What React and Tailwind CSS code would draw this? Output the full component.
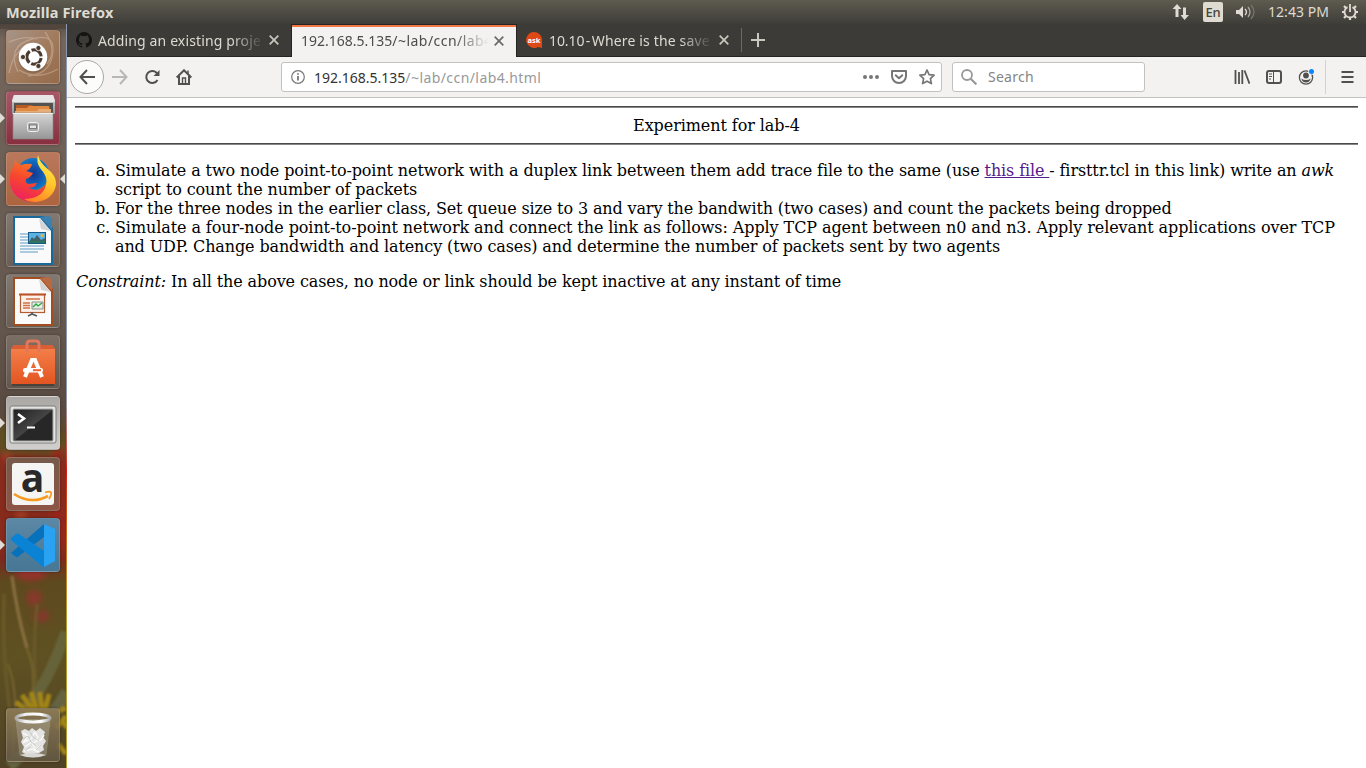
import React from "react";

const ui = "font-['Noto_Sans','Open_Sans',sans-serif]";

function Tile({ className, children, left, right }) {
  return (
    <div className={`relative ml-[6px] h-[54px] w-[54px] shrink-0 rounded-[4px] border border-white/15 shadow-[0_0_3px_rgba(0,0,0,0.35)] ${className}`}>
      <svg viewBox="0 0 54 54" className="-ml-px -mt-px block h-[54px] w-[54px]">{children}</svg>
      {left && (
        <svg viewBox="0 0 5 10" className="absolute -left-[7px] top-[21px] h-[10px] w-[5px]"><path d="M0 0 5 5 0 10Z" fill="#dfdcd6" /></svg>
      )}
      {right && (
        <svg viewBox="0 0 5 10" className="absolute -right-[6px] top-[21px] h-[10px] w-[5px]"><path d="M5 0 0 5 5 10Z" fill="#dfdcd6" /></svg>
      )}
    </div>
  );
}

function Wallpaper() {
  return (
    <svg viewBox="0 0 67 744" preserveAspectRatio="none" className="absolute inset-0 h-full w-full">
      <defs>
        <linearGradient id="wall" x1="0" y1="0" x2="0" y2="1">
          <stop offset="0" stopColor="#5a4f46" />
          <stop offset="0.02" stopColor="#74665d" />
          <stop offset="0.4" stopColor="#64574e" />
          <stop offset="0.52" stopColor="#594a41" />
          <stop offset="0.56" stopColor="#62461f" />
          <stop offset="0.6" stopColor="#793023" />
          <stop offset="0.67" stopColor="#87291f" />
          <stop offset="0.72" stopColor="#7c2a1f" />
          <stop offset="0.75" stopColor="#5d4a1f" />
          <stop offset="0.85" stopColor="#5f5122" />
          <stop offset="1" stopColor="#4f4226" />
        </linearGradient>
        <filter id="soft" x="-30%" width="160%"><feGaussianBlur stdDeviation="3" /></filter>
        <filter id="soft1" x="-30%" width="160%"><feGaussianBlur stdDeviation="1.200" /></filter>
      </defs>
      <rect width="67" height="744" fill="url(#wall)" />
      <g filter="url(#soft)">
        <path d="M0 402 12 412 30 408 67 415V428H0Z" fill="#5d5120" />
        <path d="M-5 432Q20 426 70 440V530Q30 532-5 526Z" fill="#86291e" />
        <path d="M4 430Q26 455 20 500" stroke="#a63d25" strokeWidth="7" fill="none" />
        <path d="M60 424Q45 460 64 520" stroke="#98251b" strokeWidth="10" fill="none" />
        <ellipse cx="31" cy="548" rx="15" ry="9" fill="#96312a" />
        <ellipse cx="34" cy="574" rx="8" ry="8" fill="#88392a" />
        <ellipse cx="41" cy="592" rx="9" ry="6" fill="#85372b" />
      </g>
      <g filter="url(#soft1)" fill="none">
        <path d="M12 552Q17 590 27 624" stroke="#8b7041" strokeWidth="3" />
        <path d="M4 570Q2 640 12 700M37 580Q30 650 42 690" stroke="#6a5a2a" strokeWidth="3" />
        <path d="M66 608Q48 660 22 690" stroke="#66633a" strokeWidth="11" />
        <path d="M27 625Q38 650 30 680M8 640Q20 670 12 730" stroke="#77652f" strokeWidth="2" />
        <path d="M67 668Q35 720 9 742" stroke="#65633f" strokeWidth="12" />
        <path d="M16 678 28 688M22 671 34 688M31 668 37 687M40 668 42 686M49 670 45 687M59 687 66 684M62 695 67 704" stroke="#a38518" strokeWidth="5" />
        <path d="M56 704 66 692M58 720 66 730" stroke="#a38518" strokeWidth="5" />
      </g>
      <path d="M0 0H67V5H0Z" fill="#3b322c" opacity=".35" />
    </svg>
  );
}

function Launcher() {
  return (
    <aside className="relative flex w-[67px] shrink-0 flex-col overflow-hidden">
      <Wallpaper />
      <div className="relative flex flex-1 flex-col gap-[7px] pb-[6px] pt-[6px]">
        <Tile className="bg-gradient-to-br from-[#a5958a] via-[#a27b5d] to-[#946b4b]">
          <g fill="none" stroke="#dfcbbb" opacity=".4" strokeWidth="1.3">
            <path d="M12 42Q0 16 26 9T46 27Q43 44 22 46" />
            <path d="M3 12Q19 5 31 9M39 2Q52 20 41 34M52 39Q31 51 13 40M3 43Q7 22 21 16" />
          </g>
          <circle cx="27" cy="28" r="14.7" fill="#433429" opacity=".25" />
          <circle cx="27" cy="27" r="14.3" fill="#fff" />
          <circle cx="28" cy="27" r="7.2" fill="none" stroke="#4b3a2f" strokeWidth="3.1" strokeDasharray="13.1 2" strokeDashoffset="-1" />
          <g fill="#4b3a2f" stroke="#fff" strokeWidth=".8"><circle cx="17" cy="27" r="2.6" /><circle cx="32.4" cy="18" r="2.6" /><circle cx="32.4" cy="36" r="2.6" /></g>
        </Tile>

        <Tile left className="bg-gradient-to-b from-[#a85767] to-[#87303f]">
          <defs>
            <linearGradient id="cab" x1="0" y1="0" x2="0" y2="1"><stop stopColor="#d6d6d6" /><stop offset="1" stopColor="#969696" /></linearGradient>
          </defs>
          <path d="M8 4H47L49 9V23H6V9Z" fill="url(#cab)" />
          <path d="M8 4H47L49 11H6Z" fill="#e7e7e7" />
          <path d="M8 12H47V24H8Z" fill="#555350" />
          <path d="M10 14H26L28 16H44V24H10Z" fill="#b65b26" />
          <path d="M10 17H21L23 15H43V24H10Z" fill="#df8a40" />
          <path d="M9 20H31L33 18H45V24H9Z" fill="#e6ad76" />
          <path d="M7 22H47V48H7Z" fill="url(#cab)" stroke="#888" strokeWidth=".6" />
          <path d="M7 22.5H47" stroke="#f0efef" />
          <rect x="21.5" y="31.5" width="11" height="9" rx="2" fill="#aaa" stroke="#efefef" />
          <rect x="23.5" y="34" width="7" height="3.5" fill="#e5e5e5" stroke="#696969" strokeWidth=".8" />
        </Tile>

        <Tile left right className="bg-gradient-to-b from-[#b9785d] to-[#ad643e]">
          <defs>
            <linearGradient id="fox" x1=".85" y1="0" x2=".2" y2="1"><stop stopColor="#ffe64a" /><stop offset=".35" stopColor="#ffad1d" /><stop offset=".65" stopColor="#ff6b24" /><stop offset="1" stopColor="#f01a69" /></linearGradient>
            <linearGradient id="foxred" x1=".6" y1="0" x2=".2" y2="1"><stop stopColor="#ff7f22" /><stop offset=".5" stopColor="#f7452f" /><stop offset="1" stopColor="#ed1c66" /></linearGradient>
            <linearGradient id="foxtail" x1=".5" y1="0" x2=".3" y2="1"><stop stopColor="#fff04f" /><stop offset=".55" stopColor="#ffc52a" /><stop offset="1" stopColor="#ff8426" /></linearGradient>
            <radialGradient id="globe"><stop stopColor="#15348f" /><stop offset="1" stopColor="#117ac8" /></radialGradient>
          </defs>
          <circle cx="27" cy="22" r="16" fill="url(#globe)" />
          <path d="M9 8Q11 12 15 13Q20 11 26 12Q25 17 20 19L27 21Q25 25 20 27Q19 31 22 32L31 31Q28 37 22 35Q31 42 39 34L47 34Q42 50 26 50C11 49 3 38 4 27Q4 18 8 15Z" fill="url(#foxred)" />
          <path d="M32 3C35 17 51 18 50 33Q47 48 30 50Q22 50 18 47Q34 47 39 36C43 26 38 21 34 16Q30 10 32 3Z" fill="url(#foxtail)" />
        </Tile>

        <Tile className="bg-gradient-to-b from-[#817972] to-[#6b5e55]">
          <path d="M7 3H38L47 15V52H7Z" fill="#17699c" />
          <path d="M9 5H34L45 18V50H9Z" fill="#fafafa" />
          <path d="M34 4 46 17V6L43 3Z" fill="#3c81af" /><path d="M33 5 35 16 45 18Z" fill="#d4d5d6" />
          <g stroke="#5b9cc4" strokeWidth="1.2"><path d="M14 21H22M14 24H22M14 27H22M14 30H22M14 33H38M14 36H38M14 39H32" /></g>
          <rect x="22.5" y="19.5" width="17" height="11" fill="#5ab3e7" stroke="#175986" />
          <circle cx="36" cy="22.5" r="1.5" fill="#f4b53d" />
          <path d="M23 29 26 24 28 26 31 22 35 27 39 25V30H23Z" fill="#41616b" /><path d="M23 28H39V30H23Z" fill="#28795d" />
        </Tile>

        <Tile className="bg-gradient-to-b from-[#817972] to-[#6b5e55]">
          <path d="M7 3H38L47 15V52H7Z" fill="#a34c20" />
          <path d="M9 5H34L45 18V50H9Z" fill="#fafafa" />
          <path d="M34 4 46 17V6L43 3Z" fill="#b86b43" /><path d="M33 5 35 16 45 18Z" fill="#d4d5d6" />
          <rect x="14.5" y="20.5" width="24" height="18" fill="#fcf2eb" stroke="#b35d34" strokeWidth="1.2" />
          <path d="M13 20.5H40" stroke="#bd5127" strokeWidth="2" />
          <path d="M20 25H34M17 29H24M17 31.5H24M17 34H24" stroke="#d07141" strokeWidth="1.4" />
          <path d="M26 28H37V35H26Z" fill="#e7eee5" stroke="#82908a" /><path d="m27 33 3-3 2 2 4-3" fill="none" stroke="#26a737" strokeWidth="1.3" />
          <path d="M26 38V41M26 40 22 42M26 40 31 42" stroke="#555" strokeWidth="1.5" />
        </Tile>

        <Tile className="bg-gradient-to-b from-[#7a6e65] to-[#64574e]">
          <defs><linearGradient id="bag" x1="0" y1="0" x2="0" y2="1"><stop stopColor="#f5834d" /><stop offset="1" stopColor="#e35522" /></linearGradient></defs>
          <path d="M6 48H48V51H6Z" fill="#292522" opacity=".45" />
          <path d="M5 14 8 10H46L49 14V49H5Z" fill="url(#bag)" /><path d="M8 10H46L49 14H5Z" fill="#d95e33" />
          <path d="M21 17V9Q21 6 24 6H30Q33 6 33 9V17" fill="none" stroke="#e37759" strokeWidth="3" />
          <path d="M19 42 26 25H29L36 42" fill="none" stroke="#fff" strokeWidth="4" /><rect x="17" y="33" width="20" height="4.5" rx="2" fill="#fff" /><path d="M27 35.2H35" stroke="#ed622d" strokeWidth="2" />
        </Tile>

        <Tile left className="bg-gradient-to-b from-[#aaa7a4] to-[#d0cfce]">
          <defs><linearGradient id="term" x1="0" y1="0" x2="1" y2="1"><stop stopColor="#202020" /><stop offset=".5" stopColor="#444" /><stop offset=".52" stopColor="#272727" /></linearGradient></defs>
          <rect x="4" y="10" width="46" height="37" rx="2" fill="#e3e3e1" stroke="#7d7d7b" />
          <rect x="7" y="13" width="40" height="32" rx="1" fill="url(#term)" stroke="#aaa" />
          <path d="m12 18 6 4.500-6 4.500" fill="none" stroke="#fff" strokeWidth="2.6" /><path d="M21 31.500H29" stroke="#fff" strokeWidth="2" />
        </Tile>

        <Tile className="bg-gradient-to-b from-[#755a49] to-[#8d5546]">
          <rect x="6" y="6" width="42" height="42" rx="3" fill="#f5f5f4" />
          <text x="26.5" y="34.5" textAnchor="middle" fontFamily="Open Sans, sans-serif" fontWeight="700" fontSize="39" fill="#292929">a</text>
          <path d="M8 37Q25 48 42 39" fill="none" stroke="#f79b20" strokeWidth="2.6" /><path d="M39 35.500Q44 34 45 35.500T43 42" fill="none" stroke="#f79b20" strokeWidth="1.8" />
        </Tile>

        <Tile left className="bg-gradient-to-b from-[#5c87a5] to-[#477794]">
          <path d="M5 35 10 39Q11 40 13 38L38 19V6Z" fill="#0871bb" />
          <path d="M5 20 10 16Q11 15 13 16L38 33V49L36 48 5 22Z" fill="#0b83d5" />
          <path d="M38 6 49 11V43L38 49Z" fill="#2aa2f3" />
        </Tile>

        <Tile className="mt-auto bg-gradient-to-b from-[#8d7b56]/90 to-[#655a47]/80">
          <defs><linearGradient id="glass"><stop stopColor="#aaa" /><stop offset=".25" stopColor="#efefef" /><stop offset=".75" stopColor="#fff" /><stop offset="1" stopColor="#aaa" /></linearGradient></defs>
          <path d="M10 11 14 47Q27 51 40 47L44 11" fill="#d7d8cd" opacity=".25" stroke="#e5e5df" />
          <path d="m15 23 4-2 4 2 3-3 4 3 4-3 5 4-2 5 3 4-3 5 1 4-5 3-6 1-6 1-5-3 2-5-3-5 2-4Z" fill="#e3e4e1" />
          <g fill="none" stroke="#f8f8f7" strokeWidth="1.5"><path d="m17 25 5 3-4 6 7-3 4-7 3 5-3 5 6-2 3-5M19 39l7-5 3 8 6-5M18 43l8-2 7 3" /></g>
          <g fill="none" stroke="#b9bbb7" strokeWidth=".7"><path d="m17 31 5-3 3 6 4 3m-5-13 3 5 6 4M19 43l5-4M30 42l5-5" /></g>
          <path d="M14 47Q27 43 40 47Q27 52 14 47Z" fill="#d8d8d5" />
          <ellipse cx="27" cy="10" rx="17" ry="4" fill="none" stroke="url(#glass)" strokeWidth="3" />
        </Tile>
      </div>
      <div className="absolute right-0 top-0 h-full w-px bg-gradient-to-b from-[#8c99ac] from-50% via-[#d21b14] via-60% to-[#b3a02a] to-80%" />
    </aside>
  );
}

function TopBar() {
  return (
    <header className={`flex h-6 shrink-0 items-center bg-gradient-to-b from-[#5e5b50] to-[#3e3d38] pl-[6px] pr-[7px] text-[#dfdbd2] ${ui}`}>
      <span className="text-[14.500px] font-bold leading-6 tracking-[0.16px]">Mozilla Firefox</span>
      <div className="ml-auto flex h-6 items-center">
        <svg viewBox="0 0 18 18" className="mr-[13px] h-[18px] w-[18px]" fill="#dfdbd2"><path d="M5 1 9.500 6H6.500V14H3.500V6H.5ZM12.500 17 8.500 12H11V4.500H14V12H17Z" /></svg>
        <span className="mr-[12px] flex h-5 w-5 items-center justify-center rounded-[2px] bg-[#dfdbd2] text-[13px] font-medium leading-5 tracking-[-0.3px] text-[#45433e]">En</span>
        <svg viewBox="0 0 21 18" className="mr-[12px] h-[18px] w-[21px]" fill="none" strokeWidth="1.3"><path d="M1 7H4L8 3V15L4 11H1Z" fill="#dfdbd2" /><path d="M10 6Q13 9 10 12" stroke="#dfdbd2" /><path d="M13 4Q17 9 13 14" stroke="#aaa69d" /><path d="M16 2Q22 9 16 16" stroke="#777368" /></svg>
        <span className="w-[62px] whitespace-nowrap text-[14px] leading-6 tracking-[0.05px]">12:43 PM</span>
        <svg viewBox="0 0 18 18" className="ml-[11px] h-[18px] w-[18px]" fill="none" stroke="#dfdbd2">
          <path d="M6.500 4.100A5.500 5.500 0 1 0 11.500 4.100" strokeWidth="1.8" /><path d="M9 1V9" strokeWidth="1.800" /><path d="M1 9H3.500M14.500 9H17M3 3 5 5M13 5 15 3M3 15 5 13M13 13 15 15M9 14.500V17" strokeWidth="2.200" />
        </svg>
      </div>
    </header>
  );
}

function Close({ className }) {
  return <svg viewBox="0 0 10 10" className={`h-[10px] w-[10px] shrink-0 ${className}`} fill="none" stroke="currentColor" strokeWidth="1.7"><path d="m.7.7 8.600 8.600m0-8.600L.7 9.300" /></svg>;
}

function Tabs() {
  return (
    <div className={`flex h-[33px] shrink-0 border-b border-[#252420] bg-[#3c3b37] text-[14px] text-[#dedad1] ${ui}`}>
      <div className="flex w-[224px] items-center pl-[9px]">
        <svg viewBox="0 0 16 16" className="mr-[6px] h-4 w-4 shrink-0" fill="#151413"><path d="M8 0a8 8 0 0 0-2.530 15.590c.4.070.55-.17.55-.38v-1.490c-2.230.48-2.700-.94-2.700-.94-.36-.92-.89-1.170-.89-1.170-.73-.5.060-.49.060-.49.8.060 1.230.83 1.230.83.71 1.230 1.870.87 2.330.66.070-.52.280-.87.500-1.070-1.770-.2-3.640-.89-3.640-3.950 0-.87.310-1.590.82-2.150-.08-.2-.36-1.020.08-2.120 0 0 .67-.21 2.200.82a7.600 7.600 0 0 1 4 0c1.530-1.040 2.200-.82 2.200-.82.44 1.100.16 1.920.08 2.120.51.56.82 1.270.82 2.150 0 3.070-1.870 3.750-3.650 3.950.29.25.54.73.54 1.480v2.190c0 .21.150.46.550.38A8 8 0 0 0 8 0Z" /></svg>
        <span className="w-[166px] overflow-hidden whitespace-nowrap pt-px leading-[32px] tracking-[0.13px] [mask-image:linear-gradient(to_right,black_80%,transparent_100%)]">Adding an existing proje</span>
        <Close className="ml-[5px] text-[#cbc7be]" />
      </div>
      <div className="-mb-px flex w-[226px] items-center border-x border-t border-[#252420] bg-[#f3f2f1] text-[#4c4c4c] shadow-[inset_0_2px_0_#f07746]">
        <span className="ml-[9px] w-[188px] overflow-hidden whitespace-nowrap leading-[32px] [mask-image:linear-gradient(to_right,black_82%,transparent_100%)]">192.168.5.135<span className="tracking-[0.45px]">/~lab/ccn/lab4</span></span>
        <Close className="ml-[5px] text-[#6b6a67]" />
      </div>
      <div className="flex w-[224px] items-center border-r border-transparent pl-[9px]">
        <svg viewBox="0 0 16 16" className="mr-[7px] h-4 w-4 shrink-0"><path d="M8 0A8 8 0 0 1 16 8V16L12 15A8 8 0 1 1 8 0Z" fill="#dd4814" /><text x="8" y="10.500" textAnchor="middle" fontSize="7.500" fontWeight="700" fontFamily="Noto Sans, sans-serif" fill="#fff">ask</text></svg>
        <span className="w-[164px] overflow-hidden whitespace-nowrap pt-px leading-[32px] tracking-[0.15px] [mask-image:linear-gradient(to_right,black_80%,transparent_100%)]"><span className="[word-spacing:-2px] tracking-[-0.1px]">10.10 - </span>Where is the save</span>
        <Close className="ml-[6px] text-[#cbc7be]" />
      </div>
      <div className="my-auto h-6 w-px bg-[#6c6b66]" />
      <svg viewBox="0 0 14 14" className="ml-[9px] mt-[9px] h-[14px] w-[14px]" stroke="#cbc7be" strokeWidth="2"><path d="M7 0V14M0 7H14" /></svg>
    </div>
  );
}

function Toolbar() {
  return (
    <div className={`flex h-[41px] shrink-0 items-center border-b border-[#c4c2bf] bg-[#f3f2f1] text-[14px] ${ui}`}>
      <div className="ml-[3px] flex h-[34px] w-[34px] items-center justify-center rounded-full border border-[#a9a8a6] bg-[#fcfcfb]">
        <svg viewBox="0 0 16 16" className="h-4 w-4" fill="none" stroke="#50504f" strokeWidth="2"><path d="M8 1 1.500 8 8 15M1.500 8H16" /></svg>
      </div>
      <svg viewBox="0 0 16 16" className="ml-[8px] h-4 w-4" fill="none" stroke="#b8b7b5" strokeWidth="2"><path d="m8 1 6.500 7L8 15M14.500 8H0" /></svg>
      <svg viewBox="0 0 16 16" className="ml-[16px] h-4 w-4" fill="none" stroke="#50504f" strokeWidth="2"><path d="M13.500 11A6 6 0 1 1 12.500 3.700L14 5.500" /><path d="M15.500 1V7H9.500Z" fill="#50504f" stroke="none" /></svg>
      <svg viewBox="0 0 16 16" className="ml-[16px] h-4 w-4" fill="none" stroke="#50504f" strokeWidth="2"><path d="M.7 8.500 8 1.300 15.300 8.500M3 7V15H13V7" /><path d="M6.500 15V9H9.500V15" strokeWidth="1.400" /><path d="M12 1.500V5" strokeWidth="1.500" /></svg>
      <div className="ml-[89px] flex h-[30px] w-[661px] items-center rounded-[3px] border border-[#c3c1be] bg-white pl-[9px] pr-[6px]">
        <svg viewBox="0 0 14 14" className="h-[14px] w-[14px] shrink-0" fill="none" stroke="#777" strokeWidth="1.200"><circle cx="7" cy="7" r="6.300" /><path d="M7 6V10.500M7 3.200V4.800" strokeWidth="1.800" /></svg>
        <span className="ml-[9px] whitespace-nowrap pt-px leading-7 text-[#333]">192.168.5.135<span className="tracking-[0.42px] text-[#999]">/~lab/ccn/lab4.html</span></span>
        <svg viewBox="0 0 16 16" className="ml-auto h-4 w-4" fill="#767676"><circle cx="2" cy="8" r="2" /><circle cx="8" cy="8" r="2" /><circle cx="14" cy="8" r="2" /></svg>
        <svg viewBox="0 0 16 16" className="ml-[12px] h-4 w-4" fill="none" stroke="#767676" strokeWidth="2" strokeLinejoin="round" strokeLinecap="round"><path d="M1 2H15V7A7 7 0 0 1 1 7Z" /><path d="m4.700 6.300 3.300 3 3.300-3" /></svg>
        <svg viewBox="0 0 16 16" className="ml-[12px] h-4 w-4" fill="none" stroke="#767676" strokeWidth="1.700" strokeLinejoin="round"><path d="m8 1 2.100 4.600 5 .6-3.700 3.400 1 5L8 12.200 3.600 14.600l1-5L.9 6.200l5-.6Z" /></svg>
      </div>
      <div className="ml-[10px] flex h-[30px] w-[193px] items-center rounded-[3px] border border-[#c3c1be] bg-white">
        <svg viewBox="0 0 16 16" className="ml-[8px] h-4 w-4" fill="none" stroke="#999" strokeWidth="1.800"><circle cx="6" cy="6" r="5" /><path d="m9.700 9.700 5.700 5.700" strokeWidth="2.200" /></svg>
        <span className="ml-[11px] leading-7 tracking-[0.25px] text-[#858585]">Search</span>
      </div>
      <svg viewBox="0 0 16 16" className="ml-auto h-4 w-4" fill="none" stroke="#50504f" strokeWidth="1.800"><path d="M1.500 1V15M5 3V15M8.300 1V15M10.500 1.500 15.500 14.700" /></svg>
      <svg viewBox="0 0 16 16" className="ml-[16px] h-4 w-4" fill="none" stroke="#50504f"><rect x="1" y="2" width="14" height="12" rx="2" strokeWidth="2" /><path d="M7.500 2V14M3 5H6M3 7.500H6M3 10H5" strokeWidth="1" /></svg>
      <svg viewBox="0 0 18 18" className="ml-[16px] h-[18px] w-[18px]" fill="none"><circle cx="8" cy="9.500" r="6.600" stroke="#50504f" strokeWidth="1.300" /><circle cx="8" cy="7.500" r="2.900" fill="#50504f" /><path d="M3.300 10.500Q4.300 14.500 8 14.500T12.700 10.500Q10.500 12 8 12T3.300 10.500Z" fill="#50504f" /><circle cx="13.500" cy="3.500" r="3.300" fill="#f3f2f1" /><circle cx="13.500" cy="3.500" r="2.500" fill="#0a84ff" /></svg>
      <div className="ml-[9px] h-[34px] w-px bg-[#d4d2cf]" />
      <svg viewBox="0 0 13 14" className="ml-[15px] mr-[12px] h-[14px] w-[13px]" stroke="#50504f" strokeWidth="2"><path d="M.5 2H12.500M.5 7H12.500M.5 12H12.500" /></svg>
    </div>
  );
}

function Page() {
  return (
    <main className="flex-1 whitespace-nowrap bg-white px-2 pt-2 font-['DejaVu_Serif',serif] text-[16px] leading-[19px] text-black">
      <hr className="h-[2px] border-0 border-t border-t-[#4a4a4a] bg-[#858585]" />
      <h1 className="my-2 text-center tracking-[-0.08px]">Experiment for lab-4</h1>
      <hr className="h-[2px] border-0 border-t border-t-[#4a4a4a] bg-[#858585]" />
      <ol className="mt-4 list-[lower-alpha] pl-10">
        <li className="tracking-[-0.113px]">Simulate a two node point-to-point network with a duplex link between them add trace file to the same (use <a className="text-[#551a8b] underline">this file </a>- firsttr.tcl in this link) write an <i>awk</i><br />script to count the number of packets</li>
        <li className="tracking-[-0.129px]">For the three nodes in the earlier class, Set queue size to 3 and vary the bandwith (two cases) and count the packets being dropped</li>
        <li className="tracking-[-0.086px]">Simulate a four-node point-to-point network and connect the link as follows: Apply TCP agent between n0 and n3. Apply relevant applications over TCP<br /><span className="tracking-[-0.123px]">and UDP. Change bandwidth and latency (two cases) and determine the number of packets sent by two agents</span></li>
      </ol>
      <p className="mt-4 pl-px tracking-[-0.113px]"><i>Constraint:</i> In all the above cases, no node or link should be kept inactive at any instant of time</p>
    </main>
  );
}

export default function App() {
  return (
    <div className="flex h-[768px] w-[1366px] flex-col overflow-hidden">
      <TopBar />
      <div className="flex min-h-0 flex-1">
        <Launcher />
        <div className="flex min-w-0 flex-1 flex-col">
          <Tabs />
          <Toolbar />
          <Page />
        </div>
      </div>
    </div>
  );
}
